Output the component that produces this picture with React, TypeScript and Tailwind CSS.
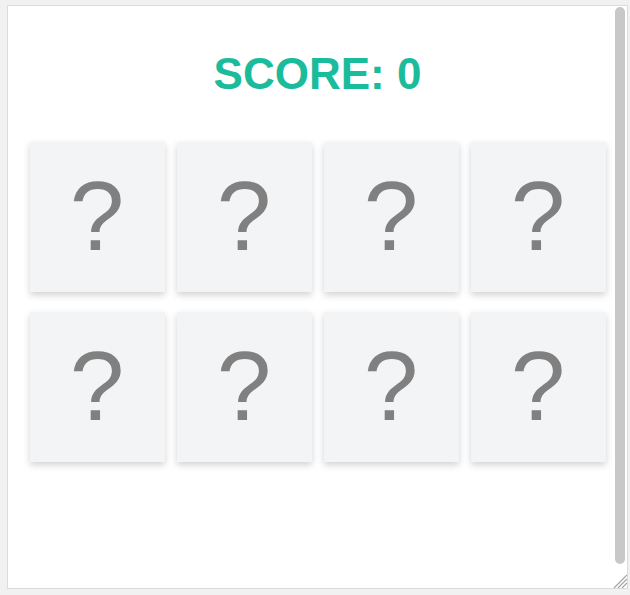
import React from 'react';

const cards = Array.from({ length: 8 }, (_, i) => i);

const App: React.FC = () => {
  return (
    <div className="w-[630px] h-[595px] bg-[#f1f1f1] pt-[5px] pl-[7px]">
      <div className="relative w-[621px] h-[584px] bg-white border border-[#dcdcdc] overflow-hidden">
        <div className="pt-[46px] flex flex-col items-center">
          <h1 className="text-[44px] leading-[44px] font-bold text-[#1abc9c] font-['Liberation_Sans',Arial,sans-serif]">
            SCORE: 0
          </h1>
          <div className="mt-[46px] grid grid-cols-[repeat(4,135px)] gap-x-[12px] gap-y-[20px]">
            {cards.map((c) => (
              <div
                key={c}
                className="w-[135px] h-[150px] bg-[#f3f4f6] shadow-[0_3px_7px_rgba(0,0,0,0.18)] flex items-center justify-center"
              >
                <span className="text-[98px] leading-none text-[#808080] font-['Liberation_Sans',Arial,sans-serif] -mt-[3px]">
                  ?
                </span>
              </div>
            ))}
          </div>
        </div>

        {/* scrollbar thumb */}
        <div className="absolute top-[1px] right-[2px] w-[10px] h-[557px] rounded-full bg-[#c8c8c8]" />

        {/* resize grip */}
        <svg className="absolute right-0 bottom-0" width="14" height="14" viewBox="0 0 14 14">
          <path d="M14 1 L1 14 M14 5 L5 14 M14 9 L9 14" stroke="#a0a0a0" strokeWidth="1.2" />
        </svg>
      </div>
    </div>
  );
};

export default App;
